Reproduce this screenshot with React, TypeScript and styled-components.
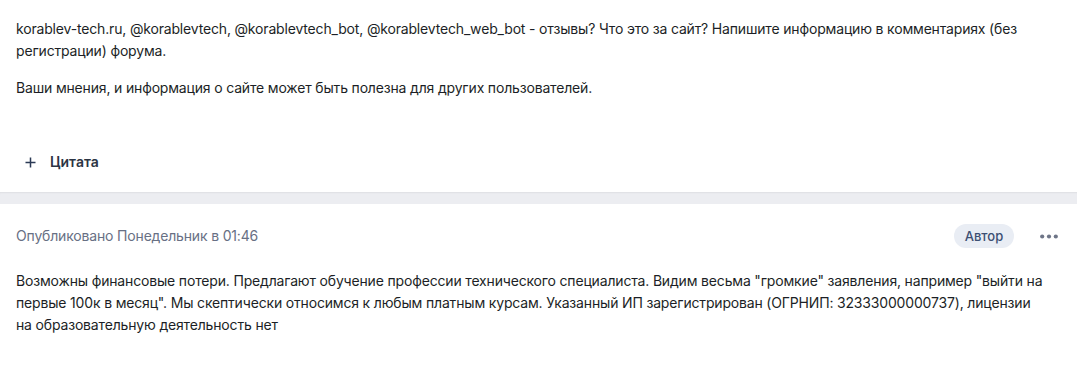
import React from "react";
import styled, { createGlobalStyle } from "styled-components";

const Global = createGlobalStyle`
  html, body { margin: 0; padding: 0; background: #ffffff; }
  body {
    font-family: Inter, "Noto Sans", "Liberation Sans", sans-serif;
    font-size: 14px;
    line-height: 22px;
    letter-spacing: -0.17px;
    color: #1c1f26;
    -webkit-font-smoothing: antialiased;
  }
`;

const Page = styled.div`
  display: flex;
  flex-direction: column;
  width: 1077px;
`;

const Post = styled.article`
  display: flex;
  flex-direction: column;
  background: #fff;
`;

const Content = styled.div<{ $top: number }>`
  padding: ${(p) => p.$top}px 30px 0 16px;
`;

const Paragraph = styled.p`
  margin: 0 0 15px 0;
  &:last-child { margin-bottom: 0; }
`;

const Footer = styled.div`
  display: flex;
  align-items: center;
  padding: 52px 16px 19px 25px;
`;

const QuoteButton = styled.button`
  display: flex;
  align-items: center;
  gap: 14px;
  border: 0;
  background: none;
  padding: 0;
  font: inherit;
  font-weight: 600;
  font-size: 14px;
  line-height: 22px;
  letter-spacing: 0;
  color: #2b3443;
  cursor: pointer;
`;

const Separator = styled.div`
  height: 12px;
  background: #ecedf1;
  box-shadow: inset 0 2px 2px -1px rgba(0, 0, 0, 0.06);
`;

const Header = styled.div`
  display: flex;
  align-items: center;
  justify-content: space-between;
  padding: 20px 16px 0 16px;
`;

const Meta = styled.span`
  color: #687084;
  font-size: 14px;
`;

const HeaderRight = styled.div`
  display: flex;
  align-items: center;
  gap: 26px;
`;

const Badge = styled.span`
  display: inline-flex;
  align-items: center;
  justify-content: center;
  height: 24px;
  width: 60px;
  border-radius: 12px;
  background: #e9edf4;
  color: #3c4f73;
  font-size: 13px;
  font-weight: 500;
  letter-spacing: 0;
`;

const MoreButton = styled.button`
  display: flex;
  align-items: center;
  border: 0;
  background: none;
  padding: 0;
  margin-right: 3px;
  cursor: pointer;
`;

const PlusIcon = () => (
  <svg width="11" height="11" viewBox="0 0 11 11" fill="none">
    <path d="M5.5 0.5v10M0.5 5.5h10" stroke="#2b3a55" strokeWidth="1.5" />
  </svg>
);

const DotsIcon = () => (
  <svg width="18" height="5" viewBox="0 0 18 5">
    <circle cx="2.2" cy="2.5" r="2.1" fill="#6e7587" />
    <circle cx="9" cy="2.5" r="2.1" fill="#6e7587" />
    <circle cx="15.8" cy="2.5" r="2.1" fill="#6e7587" />
  </svg>
);

export default function App() {
  return (
    <Page>
      <Global />
      <Post>
        <Content $top={18}>
          <Paragraph>
            korablev-tech.ru, @korablevtech, @korablevtech_bot, @korablevtech_web_bot - отзывы? Что это за сайт? Напишите информацию в комментариях (без регистрации) форума.
          </Paragraph>
          <Paragraph>
            Ваши мнения, и информация о сайте может быть полезна для других пользователей.
          </Paragraph>
        </Content>
        <Footer>
          <QuoteButton>
            <PlusIcon />
            Цитата
          </QuoteButton>
        </Footer>
      </Post>
      <Separator />
      <Post>
        <Header>
          <Meta>Опубликовано Понедельник в 01:46</Meta>
          <HeaderRight>
            <Badge>Автор</Badge>
            <MoreButton aria-label="Ещё">
              <DotsIcon />
            </MoreButton>
          </HeaderRight>
        </Header>
        <Content $top={22}>
          <Paragraph>
            Возможны финансовые потери. Предлагают обучение профессии технического специалиста. Видим весьма "громкие" заявления, например "выйти на первые 100к в месяц". Мы скептически относимся к любым платным курсам. Указанный ИП зарегистрирован (ОГРНИП: 32333000000737), лицензии на образовательную деятельность нет
          </Paragraph>
        </Content>
      </Post>
    </Page>
  );
}
